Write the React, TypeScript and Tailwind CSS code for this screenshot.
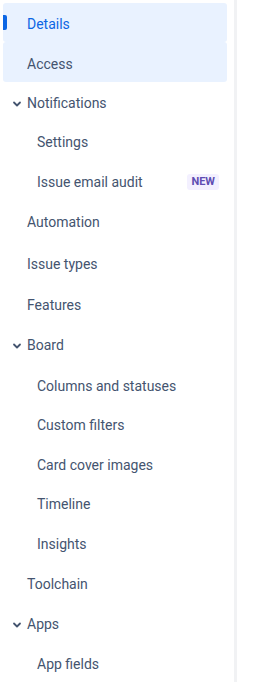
import React from 'react'

type Item = {
  label: string
  level: 0 | 1
  group?: boolean
  active?: boolean
  selected?: boolean
  badge?: string
  h?: string
}

const items: Item[] = [
  { label: 'Details', level: 0, active: true, selected: true },
  { label: 'Access', level: 0, selected: true },
  { label: 'Notifications', level: 0, group: true },
  { label: 'Settings', level: 1 },
  { label: 'Issue email audit', level: 1, badge: 'NEW' },
  { label: 'Automation', level: 0, h: 'h-[42px]' },
  { label: 'Issue types', level: 0, h: 'h-[42px]' },
  { label: 'Features', level: 0, h: 'h-[41px]' },
  { label: 'Board', level: 0, group: true, h: 'h-[42px]' },
  { label: 'Columns and statuses', level: 1 },
  { label: 'Custom filters', level: 1 },
  { label: 'Card cover images', level: 1 },
  { label: 'Timeline', level: 1 },
  { label: 'Insights', level: 1, h: 'h-[41px]' },
  { label: 'Toolchain', level: 0, h: 'h-[41px]' },
  { label: 'Apps', level: 0, group: true },
  { label: 'App fields', level: 1 },
]

function Chevron() {
  return (
    <svg width="12" height="12" viewBox="0 0 12 12" className="absolute left-[8px] top-1/2 -translate-y-[4px]">
      <path d="M3 4.5 L6 7.5 L9 4.5" fill="none" stroke="#44546f" strokeWidth="1.8" strokeLinecap="round" strokeLinejoin="round" />
    </svg>
  )
}

function NavRow({ item }: { item: Item }) {
  return (
    <div
      className={`relative flex items-center ${item.h ?? 'h-10'} rounded-[3px] pt-[3px] ${
        item.selected ? 'bg-[#e9f2ff]' : ''
      } ${item.level === 1 ? 'pl-[34px]' : 'pl-[24px]'} pr-[8px]`}
    >
      {item.active && (
        <span className="absolute left-0 top-[12px] h-[15px] w-[4px] rounded-r-[2px] bg-[#0c66e4]" />
      )}
      {item.group && <Chevron />}
      <span
        className={`flex-1 text-[14px] leading-5 ${item.active ? 'text-[#0c66e4]' : 'text-[#44546f]'}`}
      >
        {item.label}
      </span>
      {item.badge && (
        <span className="rounded-[3px] bg-[#f3f0ff] px-[4px] text-[11px] font-bold leading-4 text-[#5e4db2]">
          {item.badge}
        </span>
      )}
    </div>
  )
}

export default function App() {
  return (
    <div
      className="flex h-[682px] w-[268px] overflow-hidden bg-white"
      style={{ fontFamily: 'Roboto, "Open Sans", sans-serif' }}
    >
      <nav className="flex w-[234px] flex-col pl-[3px] pr-[7px] pt-[3px]">
        {items.map((it) => (
          <NavRow key={it.label} item={it} />
        ))}
      </nav>
      <div className="h-full w-[3px] bg-[#f1f2f4]" />
    </div>
  )
}
